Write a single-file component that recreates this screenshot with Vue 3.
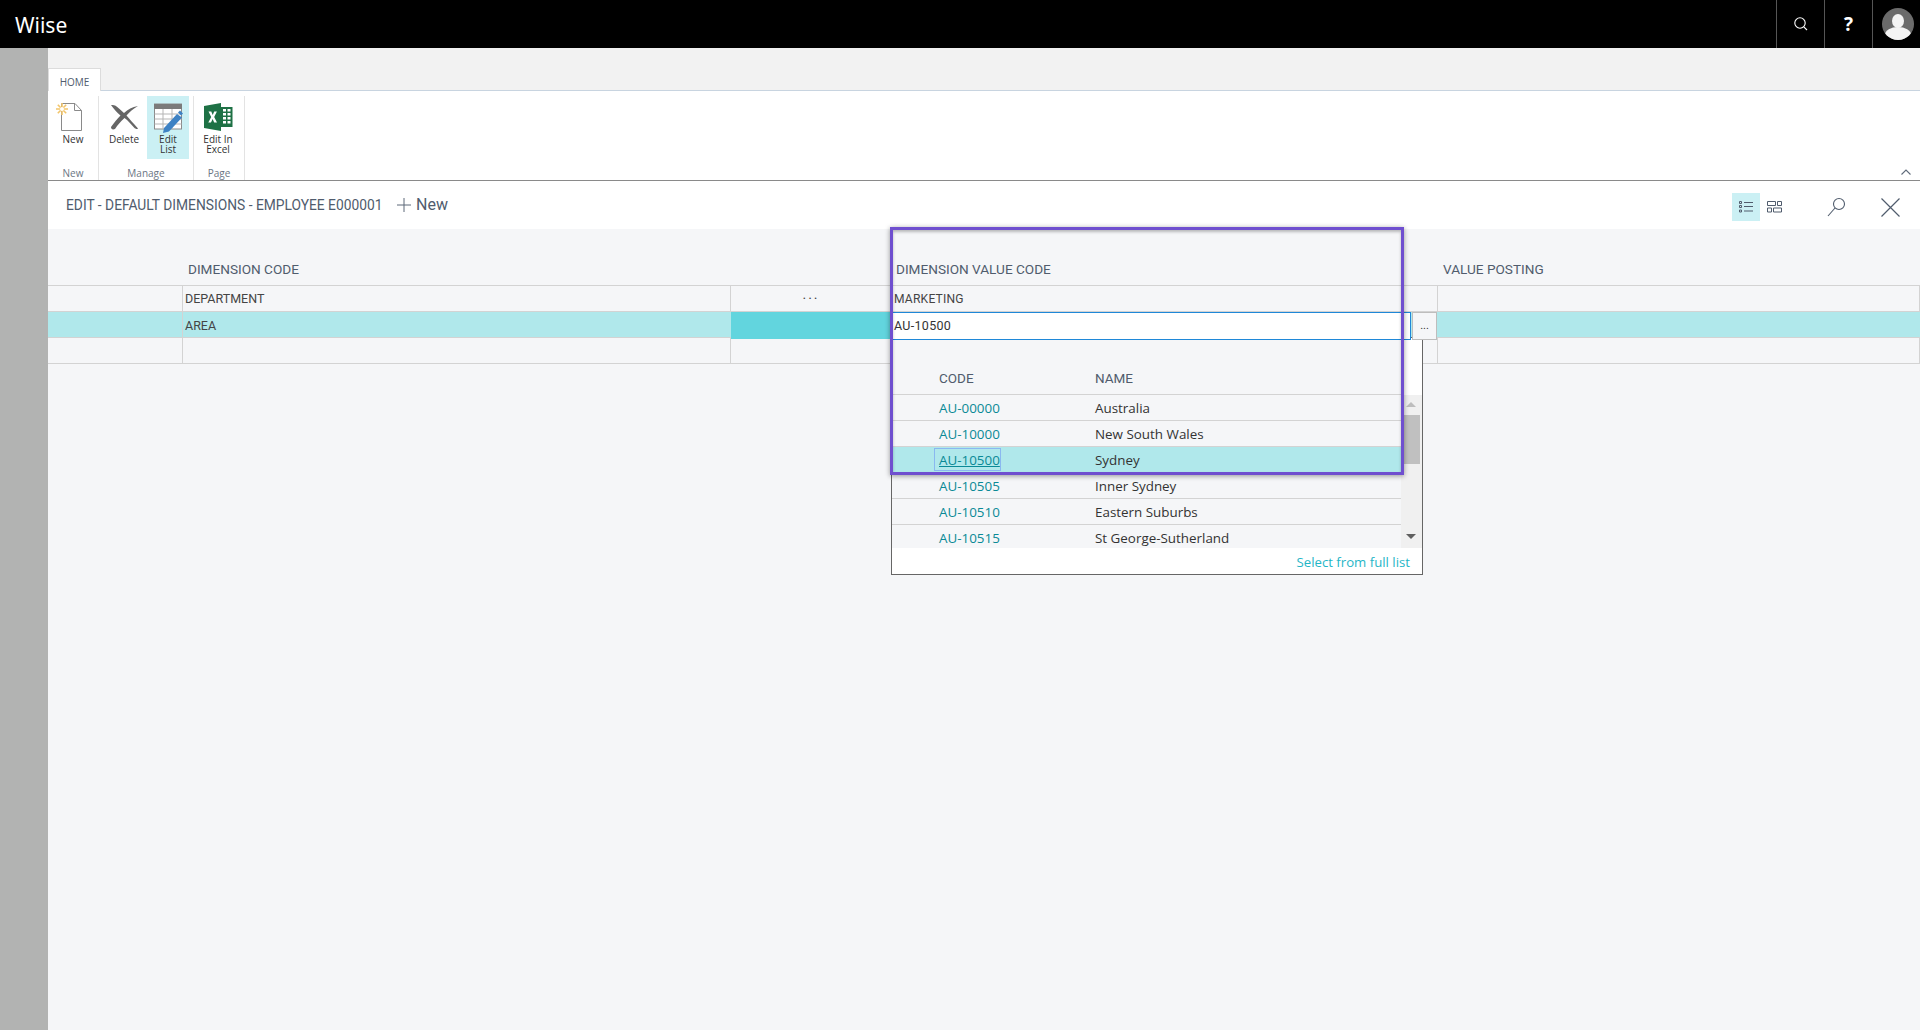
<script setup>
const rows = [
  { code: 'AU-00000', name: 'Australia' },
  { code: 'AU-10000', name: 'New South Wales' },
  { code: 'AU-10500', name: 'Sydney', selected: true },
  { code: 'AU-10505', name: 'Inner Sydney' },
  { code: 'AU-10510', name: 'Eastern Suburbs' },
  { code: 'AU-10515', name: 'St George-Sutherland' }
]
</script>

<template>
  <div class="page">
    <header class="topbar">
      <div class="brand">Wiise</div>
      <div class="top-actions">
        <div class="top-btn">
          <svg width="16" height="16" viewBox="0 0 16 16" fill="none" stroke="#fff" stroke-width="1.1">
            <circle cx="7" cy="7" r="5.2" /><path d="M10.8 10.8 14 14" />
          </svg>
        </div>
        <div class="top-btn help">?</div>
        <div class="top-btn avatar-cell">
          <svg width="32" height="32" viewBox="0 0 32 32">
            <defs><clipPath id="av"><circle cx="16" cy="16" r="16" /></clipPath></defs>
            <circle cx="16" cy="16" r="16" fill="#6b6b6b" />
            <g clip-path="url(#av)" fill="#f4f4f4">
              <ellipse cx="16" cy="13" rx="6" ry="7" />
              <ellipse cx="16" cy="27" rx="13" ry="8" />
            </g>
          </svg>
        </div>
      </div>
    </header>

    <div class="shell">
      <aside class="rail"></aside>
      <main class="main">
        <div class="tabstrip">
          <div class="tab">HOME</div>
        </div>

        <section class="ribbon">
          <div class="group group-new">
            <div class="group-items">
              <div class="action">
                <svg class="icon-new" width="28" height="28" viewBox="0 0 28 28" fill="none">
                  <path d="M5.500.5H19l6.500 7v20h-20z" fill="#fff" stroke="#8a8a8a" />
                  <path d="M18.500.5v7h7" stroke="#8a8a8a" />
                  <g stroke="#f2c56b" stroke-width="1.6">
                    <path d="M6 0v12M0 6h12M1.800 1.800l8.400 8.400M10.200 1.800l-8.400 8.400" />
                  </g>
                  <circle cx="6" cy="6" r="2" fill="#fff" />
                </svg>
                <span>New</span>
              </div>
            </div>
            <div class="group-label">New</div>
          </div>

          <div class="group group-manage">
            <div class="group-items">
              <div class="action">
                <svg width="30" height="28" viewBox="0 0 30 28" fill="none">
                  <path d="M2 2c3-.5 5 .5 8 3.500L15 10c4-3.500 8-6 14-7-5 3-8.500 6-11.500 9.500 3 3.500 7 8 11.500 13-1 1-2.500.5-4-1-3-3.500-6-7-9.500-9.500C12 18 8.500 22 6 26c-2.500 1-4 0-4-2 3-4 6-8 9.500-11.500C8 9.500 5 6 2 2z" fill="#666" />
                </svg>
                <span>Delete</span>
              </div>
              <div class="action active">
                <svg width="30" height="28" viewBox="0 0 30 28" fill="none">
                  <rect x="1.500" y="1" width="27" height="25" fill="#fff" stroke="#8b8b8b" />
                  <rect x="1" y="1" width="28" height="5" fill="#7b7b7b" />
                  <path d="M1.500 11h27M1.500 16h27M1.500 21h27M10 6v20M19 6v20" stroke="#b5b5b5" />
                  <path d="M11 25 24 11l5 3.500L16 28.500l-6 1.500z" fill="#3e82c4" />
                  <path d="M25 9.500l2-2 3 3-2 2z" fill="#3e82c4" />
                </svg>
                <span>Edit<br />List</span>
              </div>
            </div>
            <div class="group-label">Manage</div>
          </div>

          <div class="group group-page">
            <div class="group-items">
              <div class="action">
                <svg width="29" height="28" viewBox="0 0 29 28">
                  <path d="M0 3 17 0v28L0 25z" fill="#1e7145" />
                  <rect x="17" y="4" width="11.500" height="20" fill="#1e7145" />
                  <path d="M19 6h3v2.500h-3zM23.500 6h3v2.500h-3zM19 10h3v2.500h-3zM23.500 10h3v2.500h-3zM19 14h3v2.500h-3zM23.500 14h3v2.500h-3zM19 18h3v2.500h-3zM23.500 18h3v2.500h-3z" fill="#fff" />
                  <path d="M4.500 8.500h2.800L8.700 12l1.500-3.500h2.700L10.200 14l2.800 5.500h-2.800l-1.600-3.600-1.600 3.600H4.300L7.200 14z" fill="#fff" />
                </svg>
                <span>Edit In<br />Excel</span>
              </div>
            </div>
            <div class="group-label">Page</div>
          </div>

          <svg class="collapse" width="10" height="6" viewBox="0 0 10 6" fill="none" stroke="#5f6b7a" stroke-width="1.100">
            <path d="M.5 5.500 5 1l4.500 4.500" />
          </svg>
        </section>

        <section class="titlebar">
          <h1 class="title">EDIT - DEFAULT DIMENSIONS - EMPLOYEE E000001</h1>
          <div class="new-link">
            <svg width="14" height="14" viewBox="0 0 14 14" stroke="#5d6878" stroke-width="1"><path d="M7 0v14M0 7h14" /></svg>
            <span>New</span>
          </div>
          <div class="title-tools">
            <div class="view-btn on">
              <svg width="14" height="12" viewBox="0 0 14 12" fill="none" stroke="#505c6d">
                <path d="M.5.500h2v2h-2zM.5 4.500h2v2h-2zM.5 9h2v2h-2zM5 1.500h9M5 5.500h9M5 10h9" />
              </svg>
            </div>
            <div class="view-btn">
              <svg width="15" height="12" viewBox="0 0 15 12" fill="none" stroke="#505c6d">
                <path d="M.5.500h8v4h-8zM10.500.500h4v4h-4zM.5 7h4v4h-4zM6.500 7h8v4h-8z" />
              </svg>
            </div>
            <svg class="tool-search" width="19" height="20" viewBox="0 0 19 20" fill="none" stroke="#505c6d" stroke-width="1.100">
              <circle cx="12" cy="7" r="5.500" /><path d="M8 11 1 19" />
            </svg>
            <svg class="tool-close" width="19" height="19" viewBox="0 0 19 19" fill="none" stroke="#505c6d" stroke-width="1.200">
              <path d="M.5.500l18 18M18.500.500l-18 18" />
            </svg>
          </div>
        </section>

        <section class="content">
          <div class="table">
            <div class="head">
              <div></div>
              <div class="head-cell c2">DIMENSION CODE</div>
              <div></div>
              <div class="head-cell c4">DIMENSION VALUE CODE</div>
              <div class="head-cell c5">VALUE POSTING</div>
            </div>

            <div class="row">
              <div class="cell"></div>
              <div class="cell text">DEPARTMENT</div>
              <div class="cell dots">···</div>
              <div class="cell text tight">MARKETING</div>
              <div class="cell last"></div>
            </div>

            <div class="row current">
              <div class="cell"></div>
              <div class="cell text">AREA</div>
              <div class="cell strong"></div>
              <div class="cell editor">
                <div class="input">AU-10500</div>
                <div class="more">...</div>
              </div>
              <div class="cell last"></div>
            </div>

            <div class="row">
              <div class="cell"></div>
              <div class="cell"></div>
              <div class="cell"></div>
              <div class="cell"></div>
              <div class="cell last"></div>
            </div>
          </div>

          <div class="popup">
            <div class="popup-head">
              <span class="col-code">CODE</span>
              <span class="col-name">NAME</span>
            </div>
            <div class="popup-body">
              <div class="popup-rows">
                <div v-for="r in rows" :key="r.code" class="popup-row" :class="{ sel: r.selected }">
                  <span class="col-code code-link">{{ r.code }}</span>
                  <span class="col-name name-text">{{ r.name }}</span>
                </div>
              </div>
              <div class="scrollbar">
                <span class="arrow up"></span>
                <span class="thumb"></span>
                <span class="arrow down"></span>
              </div>
            </div>
            <div class="popup-foot">Select from full list</div>
          </div>

          <div class="annotation"></div>
        </section>
      </main>
    </div>
  </div>
</template>

<style>
html, body { margin: 0; padding: 0; background: #f5f6f8; overflow: hidden; }
</style>

<style scoped>
.page {
  width: 100vw; height: 100vh; display: flex; flex-direction: column; overflow: hidden;
  font-family: "Open Sans", "Noto Sans", sans-serif; color: #333;
}
.topbar { height: 48px; flex: none; background: #000; display: flex; justify-content: space-between; align-items: stretch; }
.brand { color: #fff; font-size: 21px; line-height: 50px; padding-left: 15px; font-family: "Noto Sans", sans-serif; }
.top-actions { display: flex; }
.top-btn { width: 48px; border-left: 1px solid #555; box-sizing: border-box; display: flex; align-items: center; justify-content: center; color: #fff; }
.help { font-size: 19px; font-weight: 700; font-family: "Open Sans", sans-serif; }
.avatar-cell { padding-left: 2px; }

.shell { flex: 1; display: flex; min-height: 0; }
.rail { width: 48px; flex: none; background: #b2b3b2; }
.main { flex: 1; display: flex; flex-direction: column; min-width: 0; }

.tabstrip { height: 42px; flex: none; background: #f2f2f2; border-bottom: 1px solid #c8d4e0; display: flex; align-items: flex-end; box-sizing: content-box; }
.tab {
  width: 51px; height: 22px; margin-bottom: -1px; background: #fff; border: 1px solid #dcdcdc; border-bottom: 0;
  font-size: 10px; line-height: 26px; text-align: center; color: #505c6d; box-sizing: content-box;
}

.ribbon { height: 90px; flex: none; background: #fff; border-bottom: 1px solid #8a8a8a; display: flex; position: relative; padding-top: 5px; box-sizing: border-box; }
.group { border-right: 1px solid #e3e3e3; display: flex; flex-direction: column; justify-content: space-between; box-sizing: border-box; }
.group-new { width: 51px; }
.group-manage { width: 95px; }
.group-page { width: 51px; }
.group-items { display: flex; gap: 2px; }
.group-new .group-items { padding-left: 4px; }
.group-manage .group-items { padding-left: 4px; }
.group-page .group-items { padding-left: 3px; }
.action { width: 42px; height: 63px; display: flex; flex-direction: column; align-items: center; padding-top: 7px; box-sizing: border-box; font-size: 10px; line-height: 10px; text-align: center; color: #333; }
.action svg { flex: none; margin-bottom: 3px; overflow: visible; }
.action svg.icon-new { margin-left: -6px; }
.action.active { background: #cbf0f4; }
.group-label { font-size: 10px; text-align: center; color: #6b7684; line-height: 14px; }
.collapse { position: absolute; right: 9px; bottom: 5px; }

.titlebar { height: 48px; flex: none; background: #fff; display: flex; align-items: center; padding: 2px 0 0 18px; box-sizing: border-box; }
.title { margin: 0; font: 400 13.800px/1 Roboto, sans-serif; color: #505c6d; width: 331px; white-space: nowrap; }
.new-link { display: flex; align-items: center; gap: 5px; font: 400 16px/1 Roboto, sans-serif; color: #505c6d; margin-top: -2px; }
.title-tools { margin-left: auto; margin-top: 1px; display: flex; align-items: center; padding-right: 20px; }
.view-btn { width: 28px; height: 28px; display: flex; align-items: center; justify-content: center; }
.view-btn.on { background: #cbf0f4; }
.tool-search { margin-left: 39px; }
.tool-close { margin-left: 35px; margin-top: 2px; }

.content { flex: 1; background: #f5f6f8; position: relative; }
.table { font: 400 12.500px/1 Roboto, sans-serif; color: #444; }
.head, .row { display: grid; grid-template-columns: 135px 548px 161px 546px 1fr; }
.head { height: 57px; border-bottom: 1px solid #d3d3d3; box-sizing: border-box; align-items: end; }
.head-cell { font: 400 13.600px/16px Roboto, sans-serif; color: #505c6d; padding-bottom: 8px; }
.c2 { padding-left: 5px; }
.c4 { padding-left: 4px; }
.c5 { padding-left: 5px; }
.row { height: 26px; border-bottom: 1px solid #d3d3d3; box-sizing: border-box; }
.cell { border-right: 1px solid #d3d3d3; display: flex; align-items: center; box-sizing: border-box; min-width: 0; }
.text { padding: 1px 0 0 2px; }
.tight { font-size: 12.100px; letter-spacing: .2px; }
.dots { justify-content: center; font-size: 14px; letter-spacing: 2px; color: #444; }
.row.current { background: #b0e8eb; }
.row.current .cell { border-right-color: transparent; }
.row.current .cell:first-child { border-right-color: #d3d3d3; }
.strong { background: #62d5de; }
.editor { display: flex; align-items: stretch; border-right: 0; margin-bottom: -1px; position: relative; z-index: 4; }
.input {
  width: 519px; background: #fff; border: 1px solid #1f88d8; border-left: 0; box-sizing: border-box;
  font-size: 12.500px; letter-spacing: .3px; padding-left: 2px; display: flex; align-items: center; color: #333;
}
.more {
  width: 25px; background: #f5f6f8; border: 1px solid #bdbdbd; box-sizing: border-box; margin-left: 1px;
  font-size: 11px; text-align: center; line-height: 26px; color: #333;
}

.popup {
  position: absolute; left: 843px; top: 108px; width: 532px; height: 238px; box-sizing: border-box;
  border: 1px solid #666; background: #fff; display: flex; flex-direction: column; z-index: 2;
}
.popup-head { height: 57px; flex: none; background: #f5f6f8; border-bottom: 1px solid #d3d3d3; box-sizing: border-box; display: flex; align-items: flex-end; padding-bottom: 8px; font: 400 13.500px/16px Roboto, sans-serif; color: #505c6d; width: 509px; }
.col-code { margin-left: 47px; width: 156px; flex: none; }
.col-name { flex: none; }
.popup-body { height: 153px; flex: none; display: flex; }
.popup-rows { width: 509px; flex: none; overflow: hidden; background: #f5f6f8; }
.popup-row { height: 26px; border-bottom: 1px solid #d3d3d3; box-sizing: border-box; display: flex; align-items: center; padding-top: 1px; font-size: 13.400px; position: relative; }
.code-link { color: #0a8a96; }
.name-text { color: #333; }
.popup-row.sel { background: #b0e8eb; }
.popup-row.sel .code-link { text-decoration: underline; }
.popup-row.sel .code-link::before {
  content: ""; position: absolute; left: 42px; top: 1px; width: 67px; height: 23px; border: 1px solid #8ab8f0; box-sizing: border-box;
}
.scrollbar { flex: 1; background: #f0f0f0; position: relative; }
.arrow { position: absolute; left: 5px; width: 0; height: 0; border-left: 5px solid transparent; border-right: 5px solid transparent; }
.arrow.up { top: 7px; border-bottom: 5px solid #bdbdbd; }
.arrow.down { bottom: 9px; border-top: 5px solid #5f5f5f; }
.thumb { position: absolute; top: 20px; left: 1px; width: 18px; height: 49px; background: #c0c0c0; }
.popup-foot { flex: none; height: 26px; overflow: hidden; background: #fff; color: #1fb6c7; font-size: 13.200px; line-height: 28px; text-align: right; padding-right: 12px; box-sizing: border-box; }

.annotation {
  position: absolute; left: 842px; top: -2px; width: 514px; height: 248px; box-sizing: border-box;
  border: 3px solid #6f4fcf; box-shadow: 0 1px 5px rgba(0,0,0,.4), inset 0 2px 3px rgba(0,0,0,.25); z-index: 5; pointer-events: none;
}
</style>
